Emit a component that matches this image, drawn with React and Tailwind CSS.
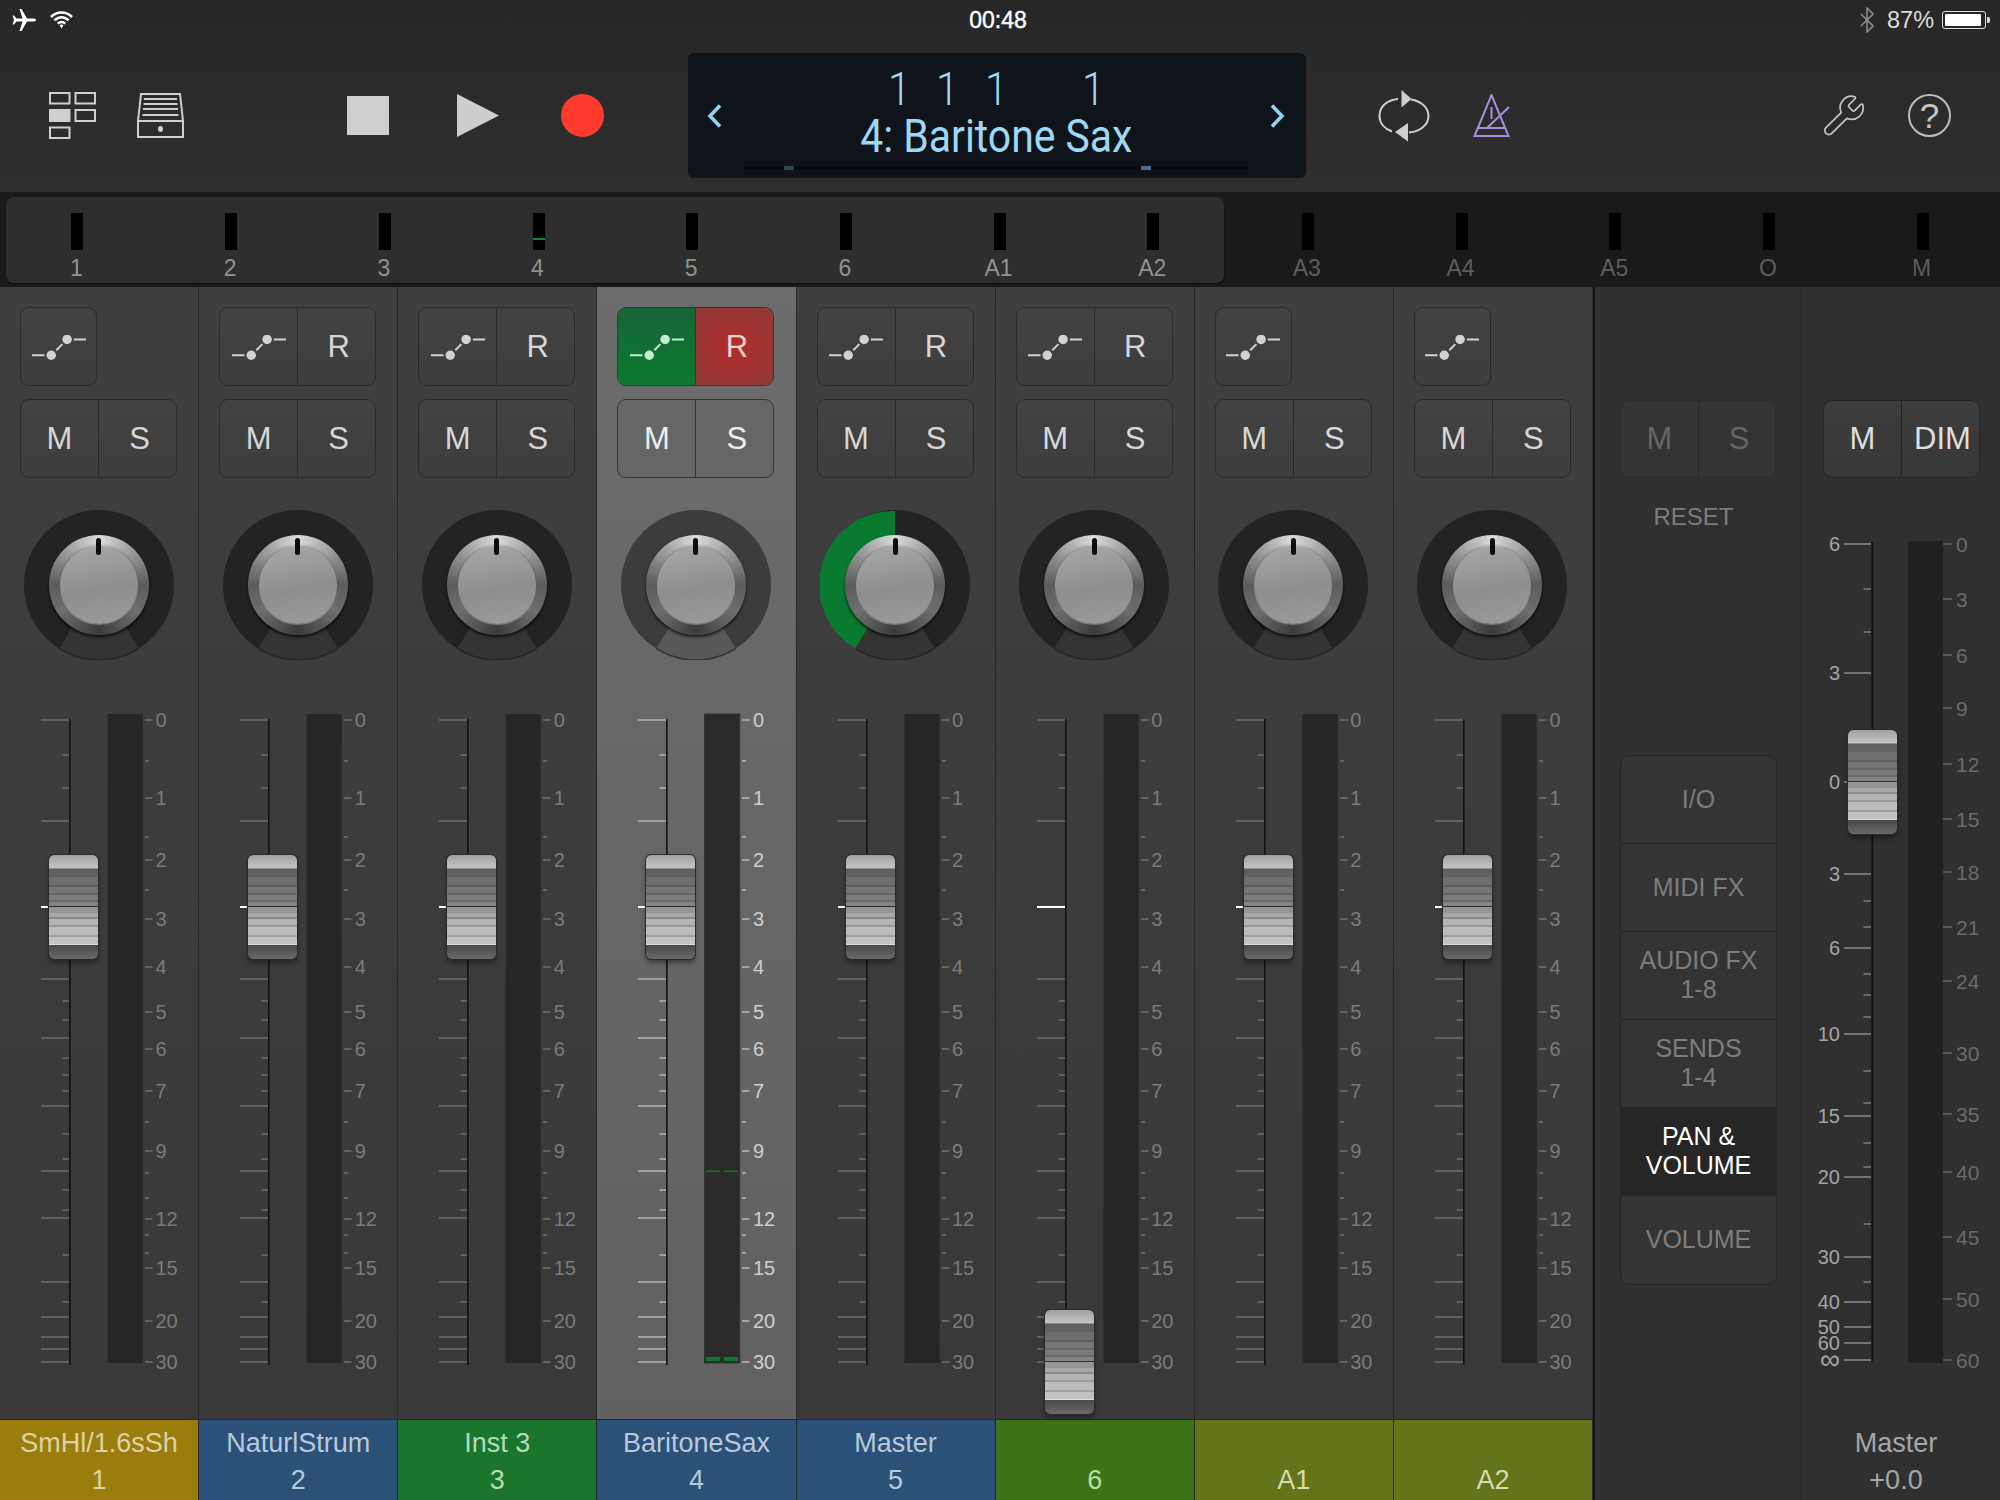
import React from "react";
import { Wrench } from "lucide-react";

const CH_LONG = [720, 821, 979, 1038, 1106, 1171, 1218, 1282, 1317, 1337, 1349, 1362];
const CH_SHORT = [755, 788, 1001, 1020, 1058, 1075, 1091, 1134, 1159, 1190, 1210, 1255, 1302];
const CH_RIGHT = [["0", 720], ["1", 798], ["2", 860], ["3", 919], ["4", 967], ["5", 1012], ["6", 1049], ["7", 1091], ["9", 1151], ["12", 1219], ["15", 1268], ["20", 1321], ["30", 1362]];
const CH_RIGHT_SHORT = [761, 837, 890, 1122, 1173, 1198, 1235, 1253];

const M_LEFT = [["6", 544], ["3", 673], ["3", 874], ["6", 948], ["10", 1034], ["15", 1116], ["20", 1177], ["30", 1257], ["40", 1302], ["50", 1327], ["60", 1343], ["∞", 1360]];
const M_SHORT = [589, 632, 901, 927, 974, 995, 1017, 1071, 1103, 1143, 1167, 1224, 1282];
const M_RIGHT = [["0", 544], ["3", 599], ["6", 655], ["9", 708], ["12", 764], ["15", 819], ["18", 872], ["21", 927], ["24", 981], ["30", 1053], ["35", 1114], ["40", 1172], ["45", 1237], ["50", 1299], ["60", 1360]];

const CHANNELS = [
  { name: "SmHl/1.6sSh", num: "1", color: "bg-[#9b7d0d]", text: "text-[#dcd3a4]", read: false, cap: 155 },
  { name: "NaturlStrum", num: "2", color: "bg-[#2c5178]", text: "text-[#b8c9dd]", read: true, cap: 155 },
  { name: "Inst 3", num: "3", color: "bg-[#1a762c]", text: "text-[#b4dab8]", read: true, cap: 155 },
  { name: "BaritoneSax", num: "4", color: "bg-[#2c5178]", text: "text-[#b8c9dd]", read: true, cap: 155, selected: true },
  { name: "Master", num: "5", color: "bg-[#2c5178]", text: "text-[#b8c9dd]", read: true, cap: 155, green: true },
  { name: "", num: "6", color: "bg-[#3d7317]", text: "text-[#bcdaa8]", read: true, cap: 610 },
  { name: "", num: "A1", color: "bg-[#63741a]", text: "text-[#d6dcb0]", read: false, cap: 155 },
  { name: "", num: "A2", color: "bg-[#63741a]", text: "text-[#d6dcb0]", read: false, cap: 155 },
];

const METERS = ["1", "2", "3", "4", "5", "6", "A1", "A2"];
const METERS_OFF = ["A3", "A4", "A5", "O", "M"];

function AutoIcon({ color = "#d2d2d2" }) {
  return (
    <svg width="54" height="25" viewBox="0 0 160 74" fill="none">
      <path d="M0 60H37M72 45L90 27M124 13H160" stroke={color} strokeWidth="6" />
      <circle cx="57" cy="60" r="14" fill={color} />
      <circle cx="104" cy="13" r="14" fill={color} />
    </svg>
  );
}

function Cell({ children, tone = "", divider = "border-[#2a2a2a]", last }) {
  return (
    <div className={`flex h-full items-center justify-center pt-[2px] ${last ? "flex-1 pl-[4px]" : "w-[78px] border-r-[1.5px] " + divider} ${tone}`}>
      {children}
    </div>
  );
}

function MeterStripItem({ label, off, level }) {
  return (
    <div className="flex w-[153.7px] shrink-0 flex-col items-center pt-[16px]">
      <div className="relative h-[37px] w-[12px] bg-black">
        {level && <div className="absolute left-0 top-[25px] h-[1.5px] w-full bg-[#0c8a30]" />}
      </div>
      <div className={`mt-[6px] -translate-x-[1px] text-[23px] leading-[24px] ${off ? "text-[#5d5d5d]" : "text-[#929292]"}`}>{label}</div>
    </div>
  );
}

function Knob({ selected, green }) {
  const ring = selected ? "#3c3c3c" : "#232323";
  const wedge = selected ? "#585858" : "#343434";
  const rim = selected ? "#333333" : "#262626";
  return (
    <div className="relative ml-[23.5px] h-[150px] w-[150px]">
      <svg width="150" height="150" viewBox="0 0 150 150" className="block">
        <circle cx="75" cy="75" r="75" fill={ring} />
        <path d="M35.3 138.6A75 75 0 0 0 114.7 138.6L99.2 113A45 45 0 0 1 50.8 113Z" fill={wedge} />
        <path d="M35.3 138.6A75 75 0 0 0 114.7 138.6" fill="none" stroke={rim} strokeWidth="1.5" />
        {green && <path d="M75 1A74 74 0 0 0 35.3 138.6L50.8 113A45 45 0 0 1 75 30Z" fill="#0a7a30" />}
      </svg>
      <div className="absolute left-[25px] top-[25px] h-[100px] w-[100px] rounded-full bg-[conic-gradient(#dcdcdc_0deg,#a8a8a8_35deg,#5c5c5c_90deg,#6e6e6e_125deg,#3c3c3c_180deg,#6e6e6e_235deg,#5c5c5c_270deg,#a8a8a8_325deg,#dcdcdc_360deg)] shadow-[0_2px_3px_rgba(0,0,0,0.75)]">
        <div className="absolute left-[11px] top-[11px] h-[78px] w-[78px] rounded-full bg-[linear-gradient(170deg,#a9a9a9_0%,#8e8e8e_55%,#9c9c9c_100%)] shadow-[0_1px_1px_rgba(255,255,255,0.35),0_-1px_2px_rgba(0,0,0,0.25)]" />
        <div className="absolute left-[47.5px] top-[3px] h-[17px] w-[5px] rounded-full bg-[#0e0e0e]" />
      </div>
    </div>
  );
}

const CAP_BG =
  "bg-[linear-gradient(180deg,#a0a0a0_0px,#c4c4c4_13px,#5f5f5f_14px,#636363_22px,#6e6e6e_22px,#6e6e6e_30px,#5f5f5f_30px,#5f5f5f_32px,#757575_32px,#757575_38px,#666666_38px,#666666_40px,#7b7b7b_40px,#7b7b7b_45px,#6a6a6a_45px,#6a6a6a_47px,#848484_47px,#848484_51px,#2c2c2c_51px,#2c2c2c_52.5px,#959595_52.5px,#959595_58px,#a8a8a8_58px,#a8a8a8_62px,#8d8d8d_62px,#8d8d8d_64px,#b5b5b5_64px,#b5b5b5_70px,#999999_70px,#999999_72px,#bcbcbc_72px,#bcbcbc_80px,#a0a0a0_80px,#a0a0a0_82px,#c2c2c2_82px,#c4c4c4_89px,#dddddd_89px,#dddddd_90px,#484848_90px,#6a6a6a_104px)]";

function Cap({ top, left }) {
  return (
    <div
      className={`absolute h-[104px] w-[49px] rounded-[5px] outline-[1px] outline-[#2a2a2a] shadow-[0_4px_5px_rgba(0,0,0,0.4)] ${CAP_BG}`}
      style={{ top, left }}
    />
  );
}

function ScaleLabel({ children, y, x, className }) {
  return (
    <span className={`absolute leading-[20px] ${className}`} style={{ top: y - 10, left: x }}>
      {children}
    </span>
  );
}

function ChannelFader({ selected, capTop }) {
  const tick = selected ? "#b4b4b4" : "#6e6e6e";
  const rtick = selected ? "#b8b8b8" : "#727272";
  const meter = selected ? "#2a2a2a" : "#262626";
  const O = 700;
  return (
    <div className="relative h-[719px]">
      <svg width="199" height="719" className="block">
        {CH_LONG.map((y) => (
          <rect key={y} x="41" y={y - O - 0.75} width="28" height="1.5" fill={tick} />
        ))}
        {CH_SHORT.map((y) => (
          <rect key={y} x="62.5" y={y - O - 0.75} width="6.5" height="1.5" fill={tick} />
        ))}
        <rect x="69" y={719 - O} width="1.6" height={646} fill="#121212" />
        <rect x="41" y={907 - O - 1} width="28" height="2" fill="#ffffff" />
        <rect x="107.5" y={714 - O} width="35.2" height={649} fill={meter} stroke={selected ? "#333" : "none"} />
        {selected && (
          <g fill="#0b7a2c">
            <rect x="109" y={1170.5 - O} width="14" height="1.6" />
            <rect x="127" y={1170.5 - O} width="14" height="1.6" />
            <rect x="109" y={1357 - O} width="14" height="4" />
            <rect x="127" y={1357 - O} width="14" height="4" />
          </g>
        )}
        {CH_RIGHT.map(([l, y]) => (
          <rect key={l} x="145" y={y - O - 0.75} width="7.5" height="1.5" fill={rtick} />
        ))}
        {CH_RIGHT_SHORT.map((y) => (
          <rect key={y} x="145" y={y - O - 0.75} width="4" height="1.5" fill={rtick} />
        ))}
      </svg>
      {CH_RIGHT.map(([l, y]) => (
        <ScaleLabel key={l} y={y - O} x={155.5} className={`text-[20px] ${selected ? "text-[#cfcfcf]" : "text-[#7b7b7b]"}`}>
          {l}
        </ScaleLabel>
      ))}
      <Cap top={capTop} left={49} />
    </div>
  );
}

function Channel({ ch }) {
  const sel = ch.selected;
  const btn = sel
    ? "border-[#353535] bg-[#666666] text-[#eeeeee]"
    : "border-[#2a2a2a] bg-[linear-gradient(180deg,#424242,#3e3e3e)] text-[#d6d6d6]";
  const div = sel ? "border-[#353535]" : "border-[#2a2a2a]";
  return (
    <div className="flex min-w-0 flex-1 flex-col border-r border-[#272727]">
      <div className={`pt-[20.5px] ${sel ? "bg-[linear-gradient(180deg,#6c6c6c,#616161)]" : "bg-[linear-gradient(180deg,#3f3f3f,#393939)]"}`}>
        <div className="h-[79px] pl-[20px]">
          <div
            className={`flex h-full overflow-hidden rounded-[9px] border-[1.5px] text-[31px] ${btn} ${
              ch.read ? "w-[157px]" : "w-[77px]"
            }`}
          >
            {ch.read ? (
              <>
                <Cell divider={div} tone={sel ? "bg-[linear-gradient(180deg,#176538,#0a7a2e)]" : ""}>
                  <AutoIcon color={sel ? "#c4ecd0" : "#d2d2d2"} />
                </Cell>
                <Cell last tone={sel ? "bg-[radial-gradient(circle,#b02c2a,#8f3a38)] text-[#f0d0d0]" : ""}>R</Cell>
              </>
            ) : (
              <div className="flex h-full w-full items-center justify-center pt-[2px]">
                <AutoIcon />
              </div>
            )}
          </div>
        </div>
        <div className="mt-[13px] h-[79px] pl-[20px]">
          <div className={`flex h-full w-[157px] overflow-hidden rounded-[9px] border-[1.5px] text-[31px] ${btn}`}>
            <Cell divider={div}>M</Cell>
            <Cell last>S</Cell>
          </div>
        </div>
        <div className="mt-[32px]">
          <Knob selected={sel} green={ch.green} />
        </div>
        <div className="mt-[40px]">
          <ChannelFader selected={sel} capTop={ch.cap} />
        </div>
      </div>
      <div className={`h-[81px] border-t border-[#272727] pt-[5px] text-center text-[27px] leading-[37px] ${ch.color} ${ch.text}`}>
        <div className="h-[37px] whitespace-nowrap">{ch.name}</div>
        <div>{ch.num}</div>
      </div>
    </div>
  );
}

function Tab({ children, active, last }) {
  return (
    <div
      className={`flex h-[88px] flex-col items-center justify-center text-[25px] leading-[29px] ${
        last ? "" : "border-b-[1.5px] border-[#262626]"
      } ${active ? "bg-[#262626] text-white" : "text-[#7d7d7d]"}`}
    >
      {children}
    </div>
  );
}

function MasterFader() {
  const O = 478;
  return (
    <div className="relative h-[941px]">
      <svg width="198" height="941" className="block">
        {M_LEFT.map(([l, y]) => (
          <rect key={y} x="42" y={y - O - 0.75} width="27" height="1.5" fill="#8a8a8a" />
        ))}
        {M_SHORT.map((y) => (
          <rect key={y} x="61.5" y={y - O - 0.75} width="7.5" height="1.5" fill="#7d7d7d" />
        ))}
        <rect x="42" y={782 - O - 0.75} width="5" height="1.5" fill="#8a8a8a" />
        <rect x="69.5" y={542 - O} width="1.6" height="819" fill="#0f0f0f" />
        <rect x="106" y={541 - O} width="35" height="822" fill="#212121" />
        {M_RIGHT.map(([l, y]) => (
          <rect key={l} x="141" y={y - O - 0.75} width="9" height="1.5" fill="#666666" />
        ))}
      </svg>
      {M_LEFT.map(([l, y]) => (
        <span
          key={y}
          className={`absolute right-[160px] leading-[16px] text-[#a4a4a4] ${l === "∞" ? "text-[28px]" : "text-[20px]"}`}
          style={{ top: y - O - 8 }}
        >
          {l}
        </span>
      ))}
      <span className="absolute right-[160px] text-[20px] leading-[16px] text-[#a4a4a4]" style={{ top: 782 - O - 8 }}>
        0
      </span>
      {M_RIGHT.map(([l, y]) => (
        <ScaleLabel key={l} y={y - O + 1} x={154} className="text-[21px] text-[#6b6b6b]">
          {l}
        </ScaleLabel>
      ))}
      <Cap top={252} left={45.7} />
    </div>
  );
}

function StatusBar() {
  return (
    <div className="relative flex h-[50px] items-start">
      <svg width="24" height="22" viewBox="0 0 24 22" className="ml-[12px] mt-[9px]" fill="#ffffff">
        <path d="M24 11C24 10 22.5 9.5 21 9.5H15L9.5 0H7.5L10.5 9.5H4.5L2 6.5H0.5L2 11L0.5 15.5H2L4.5 12.5H10.5L7.5 22H9.5L15 12.5H21C22.5 12.5 24 12 24 11Z" />
      </svg>
      <svg width="23" height="18" viewBox="0 0 23 18" className="ml-[14px] mt-[11px]" fill="none" stroke="#ffffff" strokeWidth="2.6">
        <path d="M1 6C6.8 0 16.2 0 22 6" />
        <path d="M4.4 9.4C8.4 5.2 14.6 5.2 18.6 9.4" />
        <path d="M7.8 12.6C10 10.4 13 10.4 15.2 12.6" />
        <path d="M9.6 14.2Q11.5 13 13.4 14.2L11.5 17.4Z" fill="#ffffff" stroke="none" />
      </svg>
      <div className="absolute left-0 right-0 top-[8px] pr-[4px] text-center text-[23px] leading-[24px] text-white [-webkit-text-stroke:0.4px_white]">00:48</div>
      <div className="ml-auto flex items-center pt-[7px]">
        <svg width="14" height="26" viewBox="0 0 14 26" fill="none" stroke="#8a8a8a" strokeWidth="1.6">
          <path d="M1 7L13 19L7 25V1L13 7L1 19" />
        </svg>
        <span className="ml-[13px] w-[52px] text-[23.5px] leading-[24px] text-[#dcdcdc]">87%</span>
        <div className="ml-[3px] flex items-center pr-[10px]">
          <div className="h-[18px] w-[44px] rounded-[3px] border border-[#dddddd] p-[2px]">
            <div className="h-full w-[36px] rounded-[1px] bg-white" />
          </div>
          <div className="ml-[1px] h-[6px] w-[3px] rounded-r-[2px] bg-[#dddddd]" />
        </div>
      </div>
    </div>
  );
}

function Toolbar() {
  return (
    <div className="flex h-[125px] items-center pl-[49px] mt-[3px] mb-[15px]">
      <svg width="47" height="47" viewBox="0 0 47 47" fill="none" stroke="#cfcfcf" strokeWidth="2">
        <rect x="1" y="1" width="19.5" height="10.5" />
        <rect x="26.5" y="1" width="19.5" height="10.5" />
        <rect x="1" y="18" width="19.5" height="11" fill="#cfcfcf" />
        <rect x="26.5" y="18" width="19.5" height="11" />
        <rect x="1" y="35.5" width="19.5" height="10.5" />
      </svg>
      <svg width="47" height="45" viewBox="0 0 47 45" fill="none" stroke="#cfcfcf" strokeWidth="2" className="ml-[41px]">
        <path d="M4 1H43L46 28H1Z" />
        <path d="M7 6H40M6.5 11H40.5M6 16H41M5.5 22H41.5" />
        <rect x="1" y="28" width="45" height="16" />
        <ellipse cx="23.5" cy="36" rx="2.5" ry="3" fill="#cfcfcf" stroke="none" />
      </svg>
      <div className="ml-[163px] h-[39px] w-[42px] bg-[#cfcfcf]" />
      <svg width="42" height="43" viewBox="0 0 42 43" className="ml-[68px]" fill="#cdcdcd">
        <path d="M0 0L42 21.5L0 43Z" />
      </svg>
      <div className="ml-[62px] h-[43px] w-[43px] rounded-full bg-[#ff3b30]" />
      <div className="ml-[84px] flex h-[125px] w-[618px] items-center rounded-[6px] bg-[#0e1419] pl-[19px] pr-[21px]">
        <svg width="15" height="24" viewBox="0 0 15 24" fill="none" stroke="#92d3f2" strokeWidth="3.6">
          <path d="M13 1.5L3 12L13 22.5" />
        </svg>
        <div className="flex min-w-0 flex-1 flex-col items-center self-stretch pt-[12px] text-[47px] leading-[47px] text-[#9fd8f4] [font-family:Roboto,sans-serif]">
          <div className="flex h-[47px] font-light">
            {["1", "1", "1", "", "1"].map((d, i) => (
              <span key={i} className="w-[48.5px] scale-x-[0.87] text-center">
                {d}
              </span>
            ))}
          </div>
          <div className="scale-x-[0.87] whitespace-nowrap font-normal">4: Baritone Sax</div>
          <div className="relative mt-[7px] h-[4px] w-[502px] shrink-0 bg-[#05080b]">
            <div className="absolute left-[39px] top-0 h-full w-[10px] bg-[#2e4450]" />
            <div className="absolute left-[396px] top-0 h-full w-[10px] bg-[#4c6a80]" />
          </div>
        </div>
        <svg width="15" height="24" viewBox="0 0 15 24" fill="none" stroke="#92d3f2" strokeWidth="3.6">
          <path d="M2 1.5L12 12L2 22.5" />
        </svg>
      </div>
      <svg width="52" height="52" viewBox="0 0 52 52" fill="none" className="ml-[72px]">
        <path d="M20 9C9 10 1.5 16.5 1.5 26C1.5 33.5 7 39 14 41.5" stroke="#cfcfcf" strokeWidth="2" />
        <path d="M33 9.5C43 11 50.5 17.5 50.5 26C50.5 35 42 41.5 31 42.5" stroke="#cfcfcf" strokeWidth="2" />
        <path d="M23.5 0L33.5 9L23.5 17.5Z" fill="#cfcfcf" />
        <path d="M30 33L17 42L30 51.5Z" fill="#cfcfcf" />
      </svg>
      <svg width="37" height="43" viewBox="0 0 37 43" fill="none" stroke="#a98ee0" strokeWidth="2" className="ml-[43px]">
        <path d="M18.5 1L35.5 42H1.5Z" />
        <path d="M5 34H32M18.5 13V25M14 34L36 13" />
      </svg>
      <div className="ml-[311px] flex h-[46px] w-[46px] items-center justify-center">
        <Wrench size={57} strokeWidth={0.9} color="#c4c4c4" />
      </div>
      <div className="ml-[41px] flex h-[43px] w-[43px] items-center justify-center rounded-full border-2 border-[#bcbcbc] text-[35px] leading-none text-[#c4c4c4]">
        ?
      </div>
    </div>
  );
}

export default function App() {
  return (
    <div className="flex h-[1500px] w-[2000px] flex-col overflow-hidden bg-[#2f2f2f] [font-family:'Liberation_Sans',Arial,sans-serif]">
      <div className="h-[193px] border-b border-[#1c1c1c] bg-[linear-gradient(180deg,#272727,#2f2f2f)]">
        <StatusBar />
        <Toolbar />
      </div>
      <div className="flex h-[94px] bg-[#1a1a1a] pl-[6px] pt-[4px]">
        <div className="h-[86px] w-[1218px] shrink-0 rounded-[8px] bg-[#2e2e2e] shadow-[0_1px_2px_rgba(0,0,0,0.6)]">
          <div className="-ml-[5.4px] flex">
            {METERS.map((m) => (
              <MeterStripItem key={m} label={m} level={m === "4"} />
            ))}
          </div>
        </div>
        <div className="ml-[7px] flex">
          {METERS_OFF.map((m) => (
            <MeterStripItem key={m} label={m} off />
          ))}
        </div>
      </div>
      <div className="flex flex-1">
        <div className="flex w-[1593px] shrink-0">
          {CHANNELS.map((ch) => (
            <Channel key={ch.num} ch={ch} />
          ))}
        </div>
        <div className="w-[209px] shrink-0 border-l-2 border-r border-l-[#141414] border-r-[#262626] bg-[#303030] pl-[25px] pt-[113px]">
          <div className="flex h-[78px] w-[156px] overflow-hidden rounded-[9px] border border-[#2c2c2c] bg-[#343434] text-[31px] text-[#666666]">
            <Cell divider="border-[#262626]">M</Cell>
            <Cell last>S</Cell>
          </div>
          <div className="w-[156px] pr-[9px] pt-[26px] text-center text-[24px] leading-[26px] text-[#7d7d7d]">RESET</div>
          <div className="mt-[225px] w-[157px] overflow-hidden rounded-[9px] border-[1.5px] border-[#262626] bg-[#343434]">
            <Tab>I/O</Tab>
            <Tab>MIDI FX</Tab>
            <Tab>
              <span>AUDIO FX</span>
              <span>1-8</span>
            </Tab>
            <Tab>
              <span>SENDS</span>
              <span>1-4</span>
            </Tab>
            <Tab active>
              <span>PAN &amp;</span>
              <span>VOLUME</span>
            </Tab>
            <Tab last>VOLUME</Tab>
          </div>
        </div>
        <div className="flex flex-1 flex-col bg-[#303030] pt-[113px]">
          <div className="ml-[21px] flex h-[78px] w-[157px] overflow-hidden rounded-[9px] border-[1.5px] border-[#242424] bg-[linear-gradient(180deg,#3d3d3d,#373737)] text-[31px] text-[#dedede]">
            <Cell divider="border-[#252525]">M</Cell>
            <Cell last>DIM</Cell>
          </div>
          <MasterFader />
          <div className="pr-[10px] pt-[6px] text-center text-[27px] leading-[37px] text-[#a6a6a6]">
            <div>Master</div>
            <div>+0.0</div>
          </div>
        </div>
      </div>
    </div>
  );
}
